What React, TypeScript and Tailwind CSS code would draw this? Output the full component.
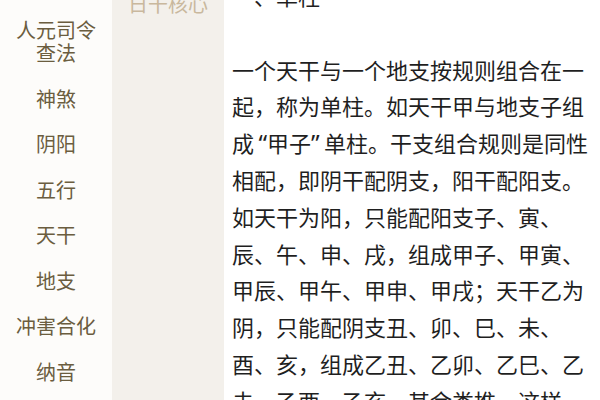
const menu: string[][] = [
  ['人元司令', '查法'],
  ['神煞'],
  ['阴阳'],
  ['五行'],
  ['天干'],
  ['地支'],
  ['冲害合化'],
  ['纳音'],
];

const before = [
  '一个天干与一个地支按规则组合在一',
  '起，称为单柱。如天干甲与地支子组',
];

const after = [
  '相配，即阴干配阴支，阳干配阳支。',
  '如天干为阳，只能配阳支子、寅、',
  '辰、午、申、戌，组成甲子、甲寅、',
  '甲辰、甲午、甲申、甲戌；天干乙为',
  '阴，只能配阴支丑、卯、巳、未、',
  '酉、亥，组成乙丑、乙卯、乙巳、乙',
  '未、乙酉、乙亥。其余类推。这样',
];

export default function App() {
  return (
    <div
      className="flex w-[600px] h-[400px] overflow-hidden bg-white"
      style={{ fontFamily: '"Noto Sans CJK SC", "Noto Sans", sans-serif' }}
    >
      {/* left menu */}
      <div className="w-[112px] shrink-0 bg-[#fdfcfa] pt-[7px]">
        {menu.map((item) => (
          <div
            key={item.join('')}
            className="py-[11.25px] text-center text-[20px] leading-[23px] text-[#6b5d3f]"
          >
            {item.map((l) => (
              <div key={l}>{l}</div>
            ))}
          </div>
        ))}
      </div>

      {/* sub menu */}
      <div className="w-[112px] shrink-0 bg-[#f3f0eb]">
        <div className="-mt-[8px] text-center text-[20px] leading-[23px] text-[#c9b89d]">
          日干核心
        </div>
      </div>

      {/* content */}
      <div className="flex-1 pl-[8px] text-[22px] leading-[36.8px] text-[#1f1f1f]">
        <p className="-mt-[23px] mb-[36.8px] whitespace-nowrap">一、单柱</p>
        <div>
          {before.map((l) => (
            <div key={l} className="h-[36.8px] whitespace-nowrap">
              {l}
            </div>
          ))}
          <div className="h-[36.8px] whitespace-nowrap">
            成
            <span className="inline-block w-[13px] text-right text-[24px] font-['Noto_Sans',sans-serif]">“</span>
            甲子
            <span className="inline-block w-[13px] text-left text-[24px] font-['Noto_Sans',sans-serif]">”</span>
            单柱。干支组合规则是同性
          </div>
          {after.map((l) => (
            <div key={l} className="h-[36.8px] whitespace-nowrap">
              {l}
            </div>
          ))}
        </div>
      </div>
    </div>
  );
}
